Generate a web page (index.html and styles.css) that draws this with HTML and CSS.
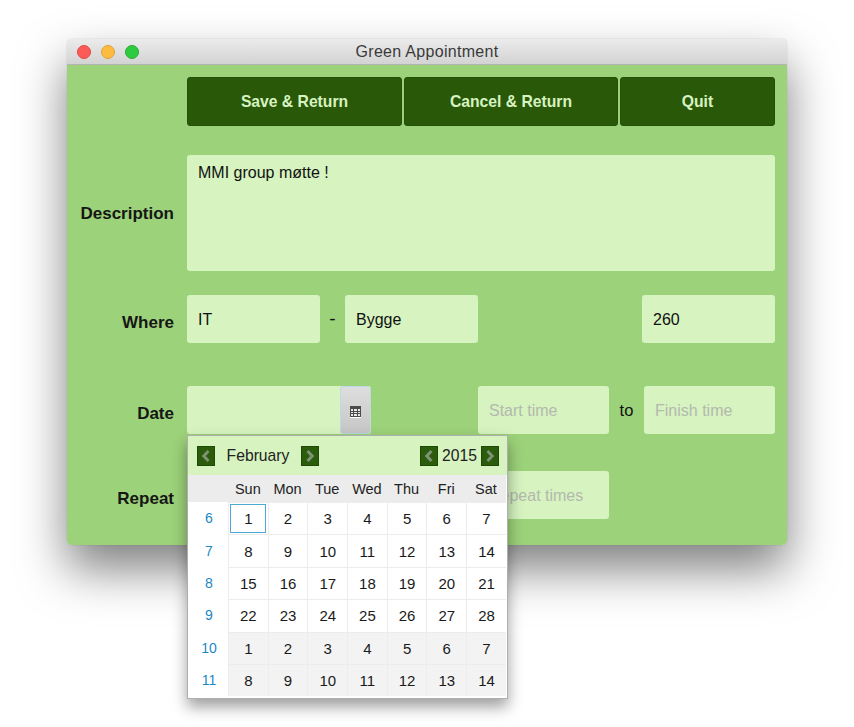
FILE: index.html
```html
<!DOCTYPE html>
<html lang="en">
<head>
<meta charset="utf-8">
<title>Green Appointment</title>
<link rel="stylesheet" href="styles.css">
</head>
<body>
<div class="window">
  <div class="titlebar">
    <span class="light red"></span><span class="light yellow"></span><span class="light green"></span>
    <span class="title">Green Appointment</span>
  </div>
  <div class="content">
    <div class="row row-buttons">
      <button class="action a1">Save &amp; Return</button>
      <button class="action a2">Cancel &amp; Return</button>
      <button class="action a3">Quit</button>
    </div>
    <div class="row row-desc">
      <div class="label center">Description</div>
      <div class="field area">MMI group møtte !</div>
    </div>
    <div class="row row-where">
      <div class="label">Where</div>
      <div class="field w133">IT</div>
      <span class="sep dash">-</span>
      <div class="field w133">Bygge</div>
      <div class="field w133 push">260</div>
    </div>
    <div class="row row-date">
      <div class="label">Date</div>
      <div class="field date">
        <span class="picker">
          <svg width="11" height="12" viewBox="0 0 11 12"><rect y="0" width="11" height="11" fill="#4a4a4a"/><g fill="#e8e8e8"><rect x="1" y="3" width="2" height="2"/><rect x="4" y="3" width="3" height="2"/><rect x="8" y="3" width="2" height="2"/><rect x="1" y="6" width="2" height="1"/><rect x="4" y="6" width="3" height="1"/><rect x="8" y="6" width="2" height="1"/><rect x="1" y="8" width="2" height="2"/><rect x="4" y="8" width="3" height="2"/><rect x="8" y="8" width="2" height="2"/></g><rect y="11" width="11" height="1" fill="#fff"/></svg>
        </span>
      </div>
      <div class="field w131 ph push-time">Start time</div>
      <span class="sep to">to</span>
      <div class="field w131 ph">Finish time</div>
    </div>
    <div class="row row-repeat">
      <div class="label">Repeat</div>
      <div class="field w131 ph push-repeat">Repeat times</div>
    </div>
  </div>
</div>

<div class="calendar">
  <div class="cal-head">
    <div class="cal-group">
      <span class="nav"><svg width="12" height="14" viewBox="0 0 12 14"><path d="M8.500 2 3.800 7l4.700 5" fill="none" stroke="#7f9277" stroke-width="3"/></svg></span>
      <span class="month">February</span>
      <span class="nav"><svg width="12" height="14" viewBox="0 0 12 14"><path d="M3.500 2 8.200 7l-4.700 5" fill="none" stroke="#7f9277" stroke-width="3"/></svg></span>
    </div>
    <div class="cal-group">
      <span class="nav"><svg width="12" height="14" viewBox="0 0 12 14"><path d="M8.500 2 3.800 7l4.700 5" fill="none" stroke="#7f9277" stroke-width="3"/></svg></span>
      <span class="year">2015</span>
      <span class="nav"><svg width="12" height="14" viewBox="0 0 12 14"><path d="M3.500 2 8.200 7l-4.700 5" fill="none" stroke="#7f9277" stroke-width="3"/></svg></span>
    </div>
  </div>
  <div class="cal-grid">
    <div class="dow"></div><div class="dow">Sun</div><div class="dow">Mon</div><div class="dow">Tue</div><div class="dow">Wed</div><div class="dow">Thu</div><div class="dow">Fri</div><div class="dow">Sat</div>

    <div class="wk">6</div><div class="day"><span class="today">1</span></div><div class="day">2</div><div class="day">3</div><div class="day">4</div><div class="day">5</div><div class="day">6</div><div class="day">7</div>
    <div class="wk">7</div><div class="day">8</div><div class="day">9</div><div class="day">10</div><div class="day">11</div><div class="day">12</div><div class="day">13</div><div class="day">14</div>
    <div class="wk">8</div><div class="day">15</div><div class="day">16</div><div class="day">17</div><div class="day">18</div><div class="day">19</div><div class="day">20</div><div class="day">21</div>
    <div class="wk">9</div><div class="day">22</div><div class="day">23</div><div class="day">24</div><div class="day">25</div><div class="day">26</div><div class="day">27</div><div class="day">28</div>
    <div class="wk">10</div><div class="day off">1</div><div class="day off">2</div><div class="day off">3</div><div class="day off">4</div><div class="day off">5</div><div class="day off">6</div><div class="day off">7</div>
    <div class="wk">11</div><div class="day off">8</div><div class="day off">9</div><div class="day off">10</div><div class="day off">11</div><div class="day off">12</div><div class="day off">13</div><div class="day off">14</div>
  </div>
</div>
</body>
</html>
```
FILE: styles.css
```css
* { box-sizing: border-box; }
html, body { margin: 0; padding: 0; background: #fff; }
body {
  width: 854px;
  height: 727px;
  overflow: hidden;
  padding: 39px 67px 0;
  font-family: "Liberation Sans", Arial, sans-serif;
  position: relative;
}
.window {
  width: 720px;
  height: 506px;
  border-radius: 5px;
  overflow: hidden;
  box-shadow: 0 24px 48px rgba(0, 0, 0, .5), 0 0 1px rgba(0, 0, 0, .35);
  display: flex;
  flex-direction: column;
}
.titlebar {
  height: 26px;
  background: linear-gradient(#ebebeb, #d3d3d3);
  border-bottom: 1px solid #b4b4b4;
  display: flex;
  align-items: center;
  padding-left: 10px;
  gap: 10px;
  position: relative;
}
.light { width: 14px; height: 14px; border-radius: 50%; }
.red { background: #fc5b57; border: 1px solid #e2483f; }
.yellow { background: #fdbc40; border: 1px solid #e1a235; }
.green { background: #2ecb41; border: 1px solid #27ad33; }
.title {
  position: absolute;
  left: 0;
  right: 0;
  top: 4px;
  text-align: center;
  font-size: 16px;
  line-height: 18px;
  color: #3a3a3a;
  letter-spacing: .3px;
}
.content {
  flex: 1;
  background: #9cd279;
  padding: 12px 12px 0 0;
  display: flex;
  flex-direction: column;
}
.row { display: flex; align-items: center; }
.row-buttons { margin-left: 120px; gap: 2px; height: 49px; }
.row-desc { margin-top: 29px; height: 116px; }
.row-where { margin-top: 24px; height: 48px; }
.row-date { margin-top: 43px; height: 48px; }
.row-repeat { margin-top: 37px; height: 48px; }
.action {
  height: 49px;
  border: 1px solid #234f07;
  border-radius: 3px;
  background: #295809;
  color: #d6f3c0;
  font: bold 15.700px "Liberation Sans", Arial, sans-serif;
  padding: 0;
}
.a1 { width: 215px; }
.a2 { width: 214px; }
.a3 { width: 155px; }
.label {
  width: 107px;
  margin-right: 13px;
  text-align: right;
  font-size: 17px;
  font-weight: bold;
  color: #161616;
  padding-top: 7px;
}
.label.center { padding-top: 1px; }
.field {
  height: 48px;
  background: #d6f3c0;
  border-radius: 3px;
  font-size: 16px;
  color: #111;
  padding: 2px 11px 0;
  display: flex;
  align-items: center;
  flex: none;
}
.area { width: 588px; height: 116px; align-items: flex-start; padding: 9px 11px; line-height: 18px; }
.w133 { width: 133px; }
.w131 { width: 131px; }
.ph { color: #b4b9ae; }
.sep { font-size: 16.500px; color: #111; text-align: center; flex: none; }
.dash { width: 25px; font-size: 19px; }
.to { width: 35px; }
.push { margin-left: 164px; }
.push-time { margin-left: 107px; }
.push-repeat { margin-left: 291px; }
.date { width: 184px; padding: 0; justify-content: flex-end; overflow: hidden; }
.picker {
  width: 31px;
  height: 48px;
  background: linear-gradient(#dedede, #c6c6c6);
  border: 1px solid #bcd9e6;
  border-radius: 3px;
  padding-top: 3px;
  display: flex;
  align-items: center;
  justify-content: center;
}
.calendar {
  position: absolute;
  left: 187px;
  top: 435px;
  width: 321px;
  height: 264px;
  background: #fff;
  border: 1px solid #aeaeae;
  box-shadow: 0 8px 14px rgba(0, 0, 0, .38);
  display: flex;
  flex-direction: column;
}
.cal-head {
  height: 39px;
  background: #d6f3c0;
  display: flex;
  justify-content: space-between;
  align-items: center;
  padding: 1px 8px 0 9px;
  font-size: 15.700px;
  color: #222;
}
.cal-group { display: flex; align-items: center; }
.nav {
  width: 18px;
  height: 20px;
  background: #2a5c0b;
  border: 1px solid #1f4a05;
  display: flex;
  align-items: center;
  justify-content: center;
  flex: none;
}
.month { width: 86px; text-align: center; }
.year { width: 43px; text-align: center; }
.cal-grid {
  display: grid;
  grid-template-columns: 40px repeat(7, 39.7px);
  grid-template-rows: 27px repeat(6, 32.4px);
  font-size: 15px;
  background: #fff;
}
.dow {
  background: #ececec;
  display: flex;
  align-items: center;
  justify-content: center;
  font-size: 14.500px;
  color: #222;
}
.wk {
  display: flex;
  align-items: center;
  justify-content: center;
  padding-left: 2px;
  color: #1b87c4;
  font-size: 14px;
}
.day {
  display: flex;
  align-items: center;
  justify-content: center;
  color: #1a1a1a;
  border-left: 1px solid #ececec;
  border-top: 1px solid #ececec;
}
.off { background: #f3f3f3; }
.today {
  width: 36px;
  height: 29px;
  border: 1px solid #4da9d3;
  display: flex;
  align-items: center;
  justify-content: center;
}
```
